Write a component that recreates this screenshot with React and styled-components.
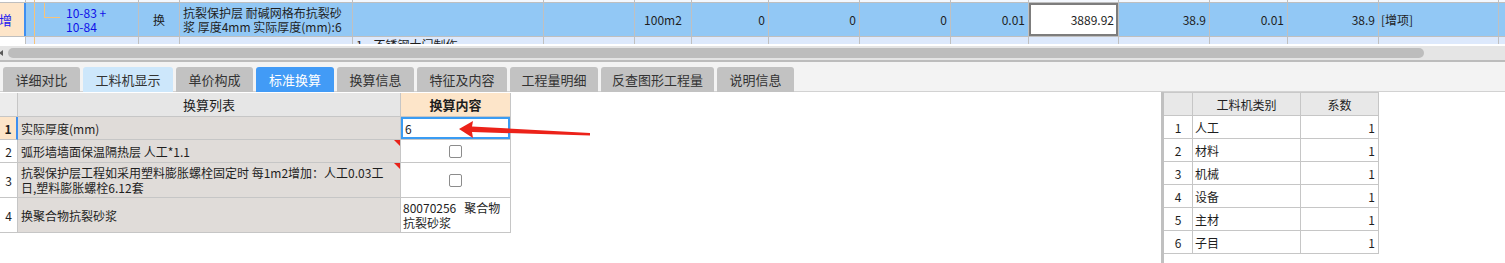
import React from 'react';
import styled, { createGlobalStyle } from 'styled-components';

const Global = createGlobalStyle`
  html, body { margin: 0; padding: 0; background: #fff; }
  body { font-family: "Noto Sans CJK SC", "Noto Sans", sans-serif; font-size: 12px; color: #1e1e1e; }
  #root { width: 1505px; height: 263px; overflow: hidden; }
`;

const COLS = '26px 113px 41px 173px 191px 91px 57px 77px 91px 91px 78px 90px 91px 78px 91px 120px 1fr';

const Page = styled.div`
  width: 1505px;
  height: 263px;
  display: flex;
  flex-direction: column;
  overflow: hidden;
`;

const TopGrid = styled.div`
  height: 44px;
  overflow: hidden;
  display: flex;
  flex-direction: column;
  flex: none;
`;

const GridRow = styled.div`
  display: grid;
  grid-template-columns: ${COLS};
  height: ${p => p.$h}px;
  flex: none;
  box-sizing: border-box;
  background: ${p => p.$bg};
  border-bottom: 1px solid #bfbfbf;
  line-height: 14px;
`;

const Cell = styled.div`
  box-sizing: border-box;
  border-right: 1px solid #c0c0c0;
  display: flex;
  align-items: ${p => (p.$top ? 'flex-start' : 'center')};
  justify-content: ${p => (p.$align === 'right' ? 'flex-end' : p.$align === 'center' ? 'center' : 'flex-start')};
  padding: 0 ${p => (p.$pad !== undefined ? p.$pad : 3)}px;
  white-space: nowrap;
  overflow: hidden;
  background: ${p => p.$bg || 'transparent'};
  color: ${p => p.$color || '#1e1e1e'};
`;

const AddCell = styled(Cell)`
  background: #fde5c9;
  border-right: 2px solid #3f8ff0;
  color: #1a1af0;
  font-size: 13px;
  padding: 0;
`;

const AddText = styled.span`
  margin-left: -1px;
`;

const EditCell = styled(Cell)`
  background: #fff;
  box-shadow: inset 0 0 0 2px #7d7d7d;
  padding-right: 4px;
`;

const TreeCell = styled(Cell)`
  padding: 0;
  align-items: stretch;
`;

const Guide = styled.span`
  flex: none;
  width: 10px;
  margin-left: 8px;
  border-left: 1px solid #f7c37a;
  box-sizing: border-box;
`;

const Elbow = styled.span`
  flex: none;
  align-self: flex-start;
  width: 16px;
  height: 15px;
  box-sizing: border-box;
  border-left: 1px solid #f7c37a;
  border-bottom: 1px solid #f7c37a;
`;

const Code = styled.span`
  align-self: center;
  margin-left: 6px;
  color: #1010e8;
  line-height: 14px;
`;

const SubText = styled.span`
  padding-top: 1px;
`;

const ScrollTrack = styled.div`
  flex: none;
  margin-top: 2px;
  height: 16px;
  box-sizing: border-box;
  background: #e5e5e5;
  border-bottom: 2px solid #bcbcbc;
  display: flex;
  align-items: center;
`;

const ScrollArrow = styled.span`
  width: 0;
  height: 0;
  margin-left: -1px;
  border-right: 4px solid #5a5a5a;
  border-top: 3px solid transparent;
  border-bottom: 3px solid transparent;
`;

const Thumb = styled.div`
  margin-left: 5px;
  width: 1416px;
  height: 10px;
  border-radius: 5px;
  background: #bdbdbd;
`;

const TabBar = styled.div`
  flex: none;
  height: 30px;
  box-sizing: border-box;
  background: #f3f3f3;
  border-bottom: 1px solid #d2d2d2;
  display: flex;
  align-items: flex-end;
  padding-left: 3px;
  gap: 3px;
`;

const Tab = styled.div`
  width: ${p => p.$w}px;
  height: 25px;
  margin-bottom: -1px;
  box-sizing: border-box;
  border-radius: 3px 3px 0 0;
  display: flex;
  align-items: center;
  justify-content: center;
  font-size: 13px;
  color: ${p => (p.$active ? '#fff' : '#333')};
  background: ${p => (p.$active ? '#429bf6' : p.$light ? '#cde7fb' : '#c2c2c2')};
`;

const Content = styled.div`
  flex: 1;
  position: relative;
  display: flex;
  background: #fff;
`;

const LeftPane = styled.div`
  flex: 0 0 1161px;
  padding-top: 1px;
`;

const RightPane = styled.div`
  flex: 1;
  border-left: 3px solid #c0c0c0;
`;

const LTable = styled.div`
  width: 511px;
  display: grid;
  grid-template-columns: 18px 383px 110px;
  grid-template-rows: 24px 23px 23px 35px 35px;
`;

const RTable = styled.div`
  width: 215px;
  display: grid;
  grid-template-columns: 29px 108px 78px;
  grid-auto-rows: 23px;
  border-top: 1px solid #c8c8c8;
`;

const TCell = styled.div`
  position: relative;
  box-sizing: border-box;
  border-right: 1px solid #c6c6c6;
  border-bottom: 1px solid #c6c6c6;
  display: flex;
  align-items: center;
  justify-content: ${p => (p.$align === 'right' ? 'flex-end' : p.$align === 'center' ? 'center' : 'flex-start')};
  padding: 0 ${p => (p.$pad !== undefined ? p.$pad : 3)}px;
  background: ${p => p.$bg || '#fff'};
  font-weight: ${p => (p.$bold ? 700 : 400)};
  font-size: ${p => p.$fs || 12}px;
  line-height: 15px;
  white-space: nowrap;
  overflow: hidden;
  ${p => p.$mark && `
    &::after {
      content: '';
      position: absolute;
      top: 0;
      right: 0;
      border-top: 6px solid #e8231a;
      border-left: 6px solid transparent;
    }
  `}
`;

const ActiveNum = styled(TCell)`
  border-right: 2px solid #3f8ff0;
`;

const FocusCell = styled(TCell)`
  box-shadow: inset 0 0 0 2px #3a9cf3;
  padding-left: 4px;
`;

const Check = styled.span`
  width: 13px;
  height: 13px;
  box-sizing: border-box;
  border: 1px solid #8c8c8c;
  border-radius: 2px;
  background: #fff;
`;

const Arrow = styled.svg`
  position: absolute;
  left: 455px;
  top: 26px;
  width: 140px;
  height: 24px;
  overflow: visible;
`;

const tabs = [
  { t: '详细对比', w: 77 },
  { t: '工料机显示', w: 90, light: true },
  { t: '单价构成', w: 77 },
  { t: '标准换算', w: 78, active: true },
  { t: '换算信息', w: 77 },
  { t: '特征及内容', w: 90 },
  { t: '工程量明细', w: 88 },
  { t: '反查图形工程量', w: 113 },
  { t: '说明信息', w: 77 },
];

const rRows = ['人工', '材料', '机械', '设备', '主材', '子目'];

export default function App() {
  const empty = Array.from({ length: 17 });
  return (
    <Page>
      <Global />
      <TopGrid>
        <GridRow $h={3} $bg="#f4f8fe">
          {empty.map((_, i) =>
            i === 1 ? (
              <TreeCell key={i}><Guide /></TreeCell>
            ) : (
              <Cell key={i} $bg={i === 0 ? '#fff' : undefined} />
            )
          )}
        </GridRow>
        <GridRow $h={34} $bg="#92c8f5">
          <AddCell><AddText>增</AddText></AddCell>
          <TreeCell>
            <Guide />
            <Elbow />
            <Code>10-83 +<br />10-84</Code>
          </TreeCell>
          <Cell $align="center">换</Cell>
          <Cell>抗裂保护层 耐碱网格布抗裂砂<br />浆 厚度4mm  实际厚度(mm):6</Cell>
          <Cell />
          <Cell />
          <Cell $align="center">100m2</Cell>
          <Cell $align="right">0</Cell>
          <Cell $align="right">0</Cell>
          <Cell $align="right">0</Cell>
          <Cell $align="right">0.01</Cell>
          <EditCell $align="right">3889.92</EditCell>
          <Cell $align="right">38.9</Cell>
          <Cell $align="right">0.01</Cell>
          <Cell $align="right">38.9</Cell>
          <Cell $pad={2}>[增项]</Cell>
          <Cell />
        </GridRow>
        <GridRow $h={22} $bg="#dde9fc">
          <Cell $bg="#fff" />
          <TreeCell><Guide /></TreeCell>
          <Cell />
          <Cell />
          <Cell $top>
            <SubText>1&nbsp;&nbsp;&nbsp;&nbsp;不锈钢大门制作</SubText>
          </Cell>
          {empty.slice(5).map((_, i) => (
            <Cell key={i} />
          ))}
        </GridRow>
      </TopGrid>

      <ScrollTrack>
        <ScrollArrow />
        <Thumb />
      </ScrollTrack>

      <TabBar>
        {tabs.map(tb => (
          <Tab key={tb.t} $w={tb.w} $active={tb.active} $light={tb.light}>
            {tb.t}
          </Tab>
        ))}
      </TabBar>

      <Content>
        <LeftPane>
          <LTable>
            <TCell $bg="#ececec" />
            <TCell $bg="#e6e6e6" $align="center" $fs={13}>换算列表</TCell>
            <TCell $bg="#fde5c9" $align="center" $bold $fs={13}>换算内容</TCell>

            <ActiveNum $bg="#fde5c9" $align="center" $pad={0} $bold>1</ActiveNum>
            <TCell $bg="#e0dcd9">实际厚度(mm)</TCell>
            <FocusCell>6</FocusCell>

            <TCell $align="center" $pad={0}>2</TCell>
            <TCell $bg="#e0dcd9" $mark>弧形墙墙面保温隔热层 人工*1.1</TCell>
            <TCell $align="center"><Check /></TCell>

            <TCell $align="center" $pad={0}>3</TCell>
            <TCell $bg="#e0dcd9" $mark>
              抗裂保护层工程如采用塑料膨胀螺栓固定时 每1m2增加：人工0.03工<br />日,塑料膨胀螺栓6.12套
            </TCell>
            <TCell $align="center"><Check /></TCell>

            <TCell $align="center" $pad={0}>4</TCell>
            <TCell $bg="#e0dcd9">换聚合物抗裂砂浆</TCell>
            <TCell $pad={2}>80070256&nbsp;&nbsp;&nbsp;聚合物<br />抗裂砂浆</TCell>
          </LTable>
        </LeftPane>

        <RightPane>
          <RTable>
            <TCell $bg="#e8e8e8" />
            <TCell $bg="#e8e8e8" $align="center">工料机类别</TCell>
            <TCell $bg="#e8e8e8" $align="center">系数</TCell>
            {rRows.map((r, i) => (
              <React.Fragment key={r}>
                <TCell $align="center" $pad={0}>{i + 1}</TCell>
                <TCell $pad={2}>{r}</TCell>
                <TCell $align="right">1</TCell>
              </React.Fragment>
            ))}
          </RTable>
        </RightPane>

        <Arrow viewBox="0 0 140 24">
          <polygon
            points="4,11 18,3 17,8.5 135,15 135,17.5 17,14 18,20"
            fill="#ec2219"
          />
        </Arrow>
      </Content>
    </Page>
  );
}
